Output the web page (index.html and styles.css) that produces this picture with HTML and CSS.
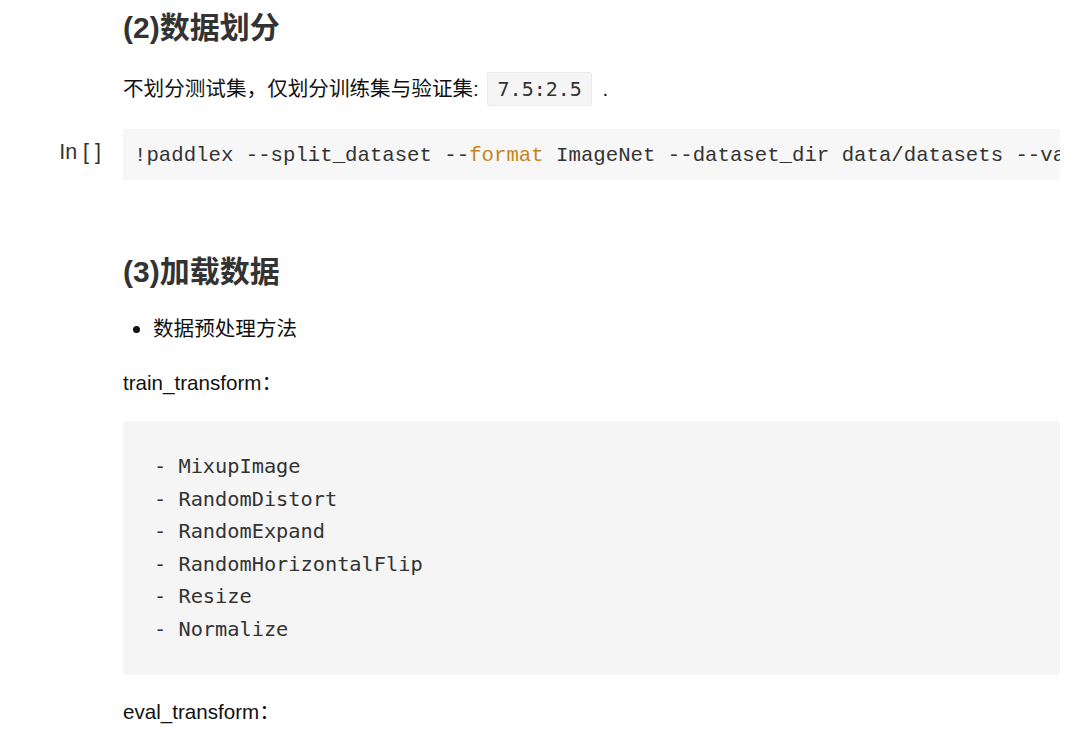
FILE: index.html
```html
<!DOCTYPE html>
<html lang="zh">
<head>
<meta charset="utf-8">
<title>Notebook</title>
<link rel="stylesheet" href="styles.css">
</head>
<body>
<div class="notebook">
  <div class="cell md first">
    <div class="prompt"></div>
    <div class="content">
      <h2 class="h">(2)数据划分</h2>
      <p class="para">不划分测试集，仅划分训练集与验证集: <code class="inline">7.5:2.5</code> .</p>
    </div>
  </div>
  <div class="cell code-cell">
    <div class="prompt">In [ ]</div>
    <div class="content">
      <div class="input">!paddlex --split_dataset --<span class="kw">format</span> ImageNet --dataset_dir data/datasets --val_value 0.25 --test_value 0.0</div>
    </div>
  </div>
  <div class="cell md second">
    <div class="prompt"></div>
    <div class="content">
      <h2 class="h">(3)加载数据</h2>
      <ul class="list">
        <li>数据预处理方法</li>
      </ul>
      <p class="label">train_transform：</p>
      <pre class="block">- MixupImage
- RandomDistort
- RandomExpand
- RandomHorizontalFlip
- Resize
- Normalize</pre>
      <p class="label eval">eval_transform：</p>
    </div>
  </div>
</div>
</body>
</html>
```

FILE: styles.css
```css
html, body {
  margin: 0;
  padding: 0;
  background: #ffffff;
}

body {
  font-family: "Liberation Sans", "Noto Sans CJK SC", sans-serif;
  color: #111;
  overflow: hidden;
}

.notebook {
  width: 1080px;
}

.cell {
  display: grid;
  grid-template-columns: 123px 937px;
}

.prompt {
  font-family: "Liberation Sans", sans-serif;
  font-size: 21.5px;
  color: #333;
  text-align: right;
  padding-right: 22px;
  line-height: 46px;
}

.content {
  min-width: 0;
}

.first {
  padding-top: 8px;
}

.h {
  margin: 0;
  font-size: 30px;
  line-height: 40px;
  font-weight: bold;
  color: #333;
  font-family: "Liberation Sans", "Noto Sans CJK SC", sans-serif;
}

.para {
  margin: 24px 0 0;
  font-size: 20.6px;
  line-height: 34px;
  color: #111;
}

.inline {
  display: inline-block;
  font-family: "DejaVu Sans Mono", monospace;
  font-size: 20px;
  line-height: 32px;
  padding: 0 9px 0 10px;
  background: #f5f5f5;
  border: 1px solid #ebebeb;
  border-radius: 2px;
  color: #333;
  margin: 0 5px 0 2px;
  vertical-align: top;
}

.code-cell {
  margin-top: 23px;
}

.input {
  background: #f7f7f7;
  height: 51px;
  line-height: 53px;
  padding: 0 0 0 11px;
  font-family: "Liberation Mono", monospace;
  font-size: 20.7px;
  color: #333;
  white-space: pre;
  overflow: hidden;
}

.kw {
  color: #c4861c;
}

.second {
  margin-top: 72px;
}

.list {
  margin: 22px 0 0;
  padding-left: 30px;
  font-size: 20.6px;
  line-height: 30px;
}

.list li::marker {
  font-size: 22px;
}

.label {
  margin: 24px 0 0;
  font-size: 20.6px;
  line-height: 30px;
  color: #111;
}

.block {
  margin: 23px 0 0;
  background: #f5f5f5;
  border-radius: 3px;
  padding: 29px 30px 29px 31px;
  font-family: "DejaVu Sans Mono", monospace;
  font-size: 20.3px;
  line-height: 32.6px;
  color: #333;
}

.eval {
  margin-top: 22px;
}
```
